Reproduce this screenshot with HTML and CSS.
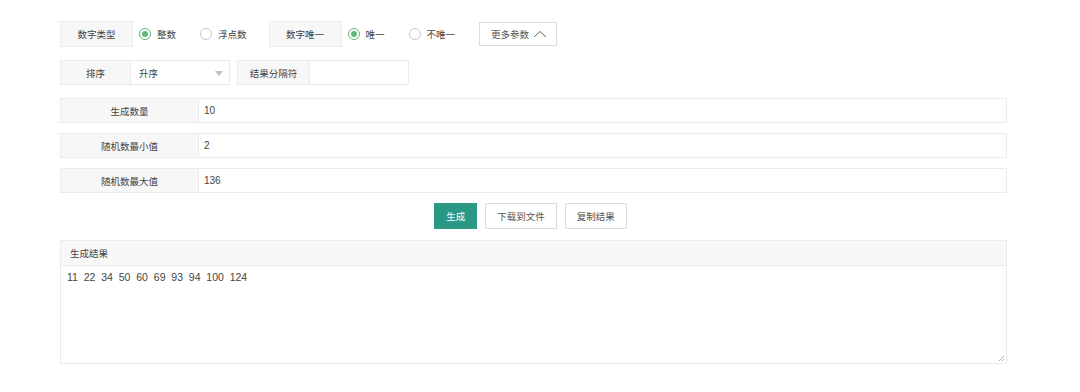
FILE: index.html
```html
<!DOCTYPE html>
<html lang="zh">
<head>
<meta charset="utf-8">
<link rel="stylesheet" href="styles.css">
</head>
<body>
<div class="wrap">
  <div class="line line-top">
    <div class="lbl w72">数字类型</div>
    <div class="radios">
      <span class="radio on"><i class="dot"></i>整数</span>
      <span class="radio"><i class="dot"></i>浮点数</span>
    </div>
    <div class="lbl w72 ml">数字唯一</div>
    <div class="radios">
      <span class="radio on"><i class="dot"></i>唯一</span>
      <span class="radio"><i class="dot"></i>不唯一</span>
    </div>
    <button class="btn more">更多参数 <svg width="14" height="8" viewBox="0 0 14 8"><path d="M1 7 L7 1.5 L13 7" fill="none" stroke="#666" stroke-width="1"/></svg></button>
  </div>
  <div class="line line-sort">
    <div class="group">
      <div class="lbl w71 joined">排序</div>
      <div class="field select">升序<span class="caret"></span></div>
    </div>
    <div class="group">
      <div class="lbl w72 joined">结果分隔符</div>
      <div class="field sep"></div>
    </div>
  </div>
  <div class="row">
    <div class="rlbl">生成数量</div>
    <div class="rval">10</div>
  </div>
  <div class="row">
    <div class="rlbl">随机数最小值</div>
    <div class="rval">2</div>
  </div>
  <div class="row">
    <div class="rlbl">随机数最大值</div>
    <div class="rval">136</div>
  </div>
  <div class="actions">
    <button class="btn primary">生成</button>
    <button class="btn">下载到文件</button>
    <button class="btn">复制结果</button>
  </div>
  <div class="panel">
    <div class="panel-head">生成结果</div>
    <div class="panel-body">11&nbsp;&nbsp;22&nbsp;&nbsp;34&nbsp;&nbsp;50&nbsp;&nbsp;60&nbsp;&nbsp;69&nbsp;&nbsp;93&nbsp;&nbsp;94&nbsp;&nbsp;100&nbsp;&nbsp;124
      <svg class="grip" width="7" height="7" viewBox="0 0 7 7"><path d="M6 1 L1 6 M6 4 L4 6" stroke="#999" stroke-width="0.8"/></svg>
    </div>
  </div>
</div>
</body>
</html>
```
FILE: styles.css
```css
* { box-sizing: border-box; }
html, body { margin: 0; padding: 0; background: #fff; }
body {
  font-family: "Noto Sans CJK SC", "Liberation Sans", sans-serif;
  font-size: 9.5px;
  color: #444;
}
.wrap {
  margin-left: 60px;
  width: 947px;
  padding-top: 21px;
}
.line {
  display: flex;
  align-items: center;
}
.line-top { height: 26px; }
.lbl {
  background: #f7f7f7;
  border: 1px solid #ebebeb;
  height: 26px;
  display: flex;
  align-items: center;
  justify-content: center;
}
.w72 { width: 73px; }
.w71 { width: 71px; }
.ml { margin-left: 22px; }
.radios {
  display: flex;
  align-items: center;
  padding-left: 6px;
}
.radio {
  display: flex;
  align-items: center;
  margin-right: 24px;
}
.radio:last-child { margin-right: 0; }
.radio .dot {
  width: 12px;
  height: 12px;
  border-radius: 50%;
  border: 1px solid #c9c9c9;
  margin-right: 6px;
  display: flex;
  align-items: center;
  justify-content: center;
}
.radio.on .dot { border-color: #5fb878; }
.radio.on .dot::after {
  content: "";
  width: 6px;
  height: 6px;
  border-radius: 50%;
  background: #5fb878;
}
.btn {
  font-family: inherit;
  font-size: 9.5px;
  color: #555;
  background: #fff;
  border: 1px solid #dcdcdc;
  height: 26px;
  padding: 0 11px;
  cursor: pointer;
  display: inline-flex;
  align-items: center;
}
.btn.more {
  margin-left: 24px;
  height: 24px;
  padding: 0 5px 0 11px;
  width: 78px;
}
.btn.more svg { margin-left: 4px; }
.line-sort {
  margin-top: 13px;
  height: 25px;
  gap: 7px;
}
.group { display: flex; height: 25px; }
.group .lbl { height: 25px; }
.field {
  border: 1px solid #ebebeb;
  border-left: none;
  height: 25px;
  background: #fff;
  display: flex;
  align-items: center;
}
.select {
  width: 99px;
  padding-left: 8px;
  position: relative;
}
.caret {
  position: absolute;
  right: 6px;
  top: 10px;
  width: 0;
  height: 0;
  border-left: 4px solid transparent;
  border-right: 4px solid transparent;
  border-top: 5px solid #c2c2c2;
}
.sep { width: 99px; }
.row {
  display: flex;
  height: 25px;
  border: 1px solid #ebebeb;
  margin-top: 10px;
}
.line-sort + .row { margin-top: 13px; }
.rlbl {
  width: 138px;
  background: #f7f7f7;
  border-right: 1px solid #ebebeb;
  display: flex;
  align-items: center;
  justify-content: center;
}
.rval {
  flex: 1;
  display: flex;
  align-items: center;
  padding-left: 5px;
  font-family: "Liberation Sans", sans-serif;
  font-size: 10px;
}
.actions {
  display: flex;
  justify-content: center;
  gap: 8px;
  margin-top: 10px;
  padding-right: 6px;
}
.actions .btn { height: 26px; padding: 0 11px; }
.btn.primary {
  background: #2b9886;
  border-color: #2b9886;
  color: #fff;
  padding: 0 11px;
}
.panel {
  margin-top: 11px;
  border: 1px solid #ebebeb;
  height: 124px;
  display: flex;
  flex-direction: column;
}
.panel-head {
  height: 25px;
  background: #f8f8f8;
  border-bottom: 1px solid #ebebeb;
  display: flex;
  align-items: center;
  padding-left: 9px;
}
.panel-body {
  flex: 1;
  padding: 5px 6px;
  position: relative;
  font-family: "Liberation Sans", sans-serif;
  font-size: 10.5px;
}
.grip {
  position: absolute;
  right: 1px;
  bottom: 1px;
}
```
